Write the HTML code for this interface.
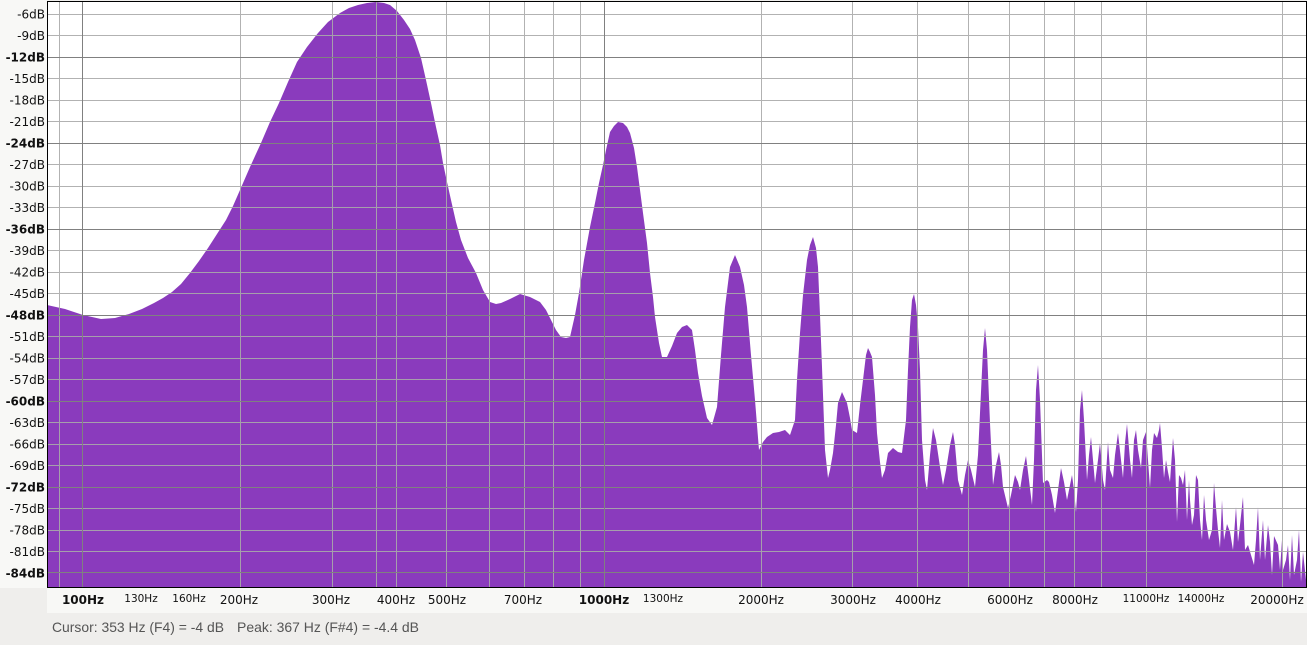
<!DOCTYPE html>
<html><head><meta charset="utf-8"><style>
html,body{margin:0;padding:0;background:#efeeec;}
svg{display:block;font-family:"DejaVu Sans","Liberation Sans",sans-serif;}
</style></head><body>
<svg width="1307" height="645" viewBox="0 0 1307 645" xmlns="http://www.w3.org/2000/svg">
<rect x="0" y="0" width="1307" height="645" fill="#efeeec"/>
<rect x="0" y="0" width="47" height="588" fill="#f8f8f6"/>
<rect x="47" y="588" width="1260" height="25" fill="#f8f8f6"/>
<rect x="47" y="1" width="1260" height="586" fill="#ffffff"/>
<path fill="#8a3bbd" d="M47,587 L47,305 L65,309 L83,315 L101,319 L115,318 L129,314 L142,309 L154,303 L163,298 L172,292 L181,284 L190,273 L199,261 L208,248 L217,234 L226,220 L233,206 L240,190 L250,167 L261,143 L270,122 L279,103 L288,82 L297,62 L307,47 L318,33 L328,22 L340,13 L349,8 L358,5 L367,3 L376,2 L384,3 L390,5 L397,11 L404,20 L410,29 L415,40 L421,58 L426,80 L431,103 L436,127 L440,145 L443,163 L447,182 L451,200 L456,222 L461,240 L468,258 L476,273 L483,290 L490,302 L496,304 L501,303 L510,299 L520,294 L530,297 L540,302 L546,310 L551,320 L556,330 L561,337 L566,338 L570,337 L575,315 L579,293 L584,260 L590,227 L595,203 L599,183 L603,165 L606,150 L610,132 L614,126 L618,122 L623,123 L627,127 L630,133 L634,148 L637,167 L640,190 L643,213 L647,243 L650,273 L653,297 L655,317 L659,343 L662,357 L667,357 L672,346 L677,333 L682,327 L687,325 L692,330 L695,350 L698,373 L702,396 L707,418 L712,425 L717,407 L721,355 L725,307 L730,267 L735,255 L740,267 L744,285 L747,307 L751,355 L755,400 L759,450 L763,442 L767,437 L773,433 L779,432 L785,430 L790,435 L795,420 L797,380 L800,333 L803,295 L807,260 L810,245 L813,237 L816,248 L818,267 L820,315 L822,367 L825,450 L828,478 L830,470 L833,453 L836,425 L838,403 L842,392 L847,403 L850,418 L852,430 L857,433 L860,405 L863,380 L866,355 L868,348 L870,352 L872,357 L875,395 L877,433 L880,462 L882,478 L885,470 L888,453 L893,448 L898,452 L902,453 L906,420 L908,370 L910,327 L912,300 L914,294 L916,305 L918,327 L920,370 L922,440 L925,480 L927,490 L930,455 L933,428 L936,440 L940,467 L943,485 L946,470 L950,445 L953,432 L955,445 L958,480 L962,495 L965,475 L968,460 L971,470 L975,487 L978,455 L980,413 L983,350 L985,328 L987,350 L990,423 L993,485 L996,465 L999,452 L1001,465 L1003,487 L1008,508 L1011,495 L1015,475 L1018,482 L1020,490 L1023,470 L1026,456 L1029,480 L1032,505 L1034,460 L1036,390 L1038,365 L1040,400 L1043,483 L1047,480 L1049,482 L1052,495 L1055,513 L1058,490 L1061,468 L1064,482 L1067,500 L1070,485 L1072,475 L1074,490 L1076,512 L1078,480 L1080,410 L1082,390 L1084,420 L1087,480 L1089,455 L1091,437 L1093,460 L1095,483 L1098,460 L1100,443 L1103,480 L1105,490 L1108,442 L1110,470 L1113,478 L1115,455 L1118,433 L1121,460 L1123,478 L1125,443 L1127,424 L1130,460 L1132,478 L1134,440 L1136,430 L1138,450 L1141,468 L1143,440 L1146,432 L1148,460 L1150,488 L1152,450 L1154,433 L1157,438 L1159,430 L1160,423 L1162,448 L1164,478 L1166,460 L1168,472 L1170,482 L1173,438 L1175,460 L1177,522 L1179,475 L1181,478 L1183,485 L1185,470 L1187,520 L1189,480 L1190,500 L1192,525 L1194,515 L1196,475 L1198,480 L1200,520 L1202,540 L1204,495 L1206,520 L1209,540 L1212,530 L1214,483 L1216,508 L1218,530 L1220,548 L1222,500 L1224,540 L1227,524 L1230,532 L1233,550 L1236,507 L1238,542 L1240,525 L1243,497 L1245,550 L1248,545 L1251,555 L1254,565 L1256,540 L1258,507 L1260,560 L1263,520 L1265,560 L1268,525 L1270,542 L1272,575 L1274,536 L1278,545 L1280,570 L1282,540 L1283,570 L1286,560 L1288,545 L1290,580 L1292,535 L1294,575 L1297,560 L1299,530 L1301,582 L1303,552 L1306,580 L1306,587 Z"/>
<g stroke="#aaaaaa" stroke-width="1" opacity="0.9">
<line x1="47" x2="1307" y1="14.5" y2="14.5"/><line x1="47" x2="1307" y1="35.5" y2="35.5"/>
<line x1="47" x2="1307" y1="78.5" y2="78.5"/><line x1="47" x2="1307" y1="100.5" y2="100.5"/><line x1="47" x2="1307" y1="121.5" y2="121.5"/>
<line x1="47" x2="1307" y1="164.5" y2="164.5"/><line x1="47" x2="1307" y1="186.5" y2="186.5"/><line x1="47" x2="1307" y1="207.5" y2="207.5"/>
<line x1="47" x2="1307" y1="250.5" y2="250.5"/><line x1="47" x2="1307" y1="272.5" y2="272.5"/><line x1="47" x2="1307" y1="293.5" y2="293.5"/>
<line x1="47" x2="1307" y1="336.5" y2="336.5"/><line x1="47" x2="1307" y1="358.5" y2="358.5"/><line x1="47" x2="1307" y1="379.5" y2="379.5"/>
<line x1="47" x2="1307" y1="422.5" y2="422.5"/><line x1="47" x2="1307" y1="444.5" y2="444.5"/><line x1="47" x2="1307" y1="465.5" y2="465.5"/>
<line x1="47" x2="1307" y1="508.5" y2="508.5"/><line x1="47" x2="1307" y1="530.5" y2="530.5"/><line x1="47" x2="1307" y1="551.5" y2="551.5"/>
<line y1="1" y2="587" x1="59.5" x2="59.5"/><line y1="1" y2="587" x1="240.5" x2="240.5"/><line y1="1" y2="587" x1="332.5" x2="332.5"/>
<line y1="1" y2="587" x1="376.5" x2="376.5"/><line y1="1" y2="587" x1="396.5" x2="396.5"/><line y1="1" y2="587" x1="446.5" x2="446.5"/>
<line y1="1" y2="587" x1="489.5" x2="489.5"/><line y1="1" y2="587" x1="524.5" x2="524.5"/><line y1="1" y2="587" x1="553.5" x2="553.5"/>
<line y1="1" y2="587" x1="580.5" x2="580.5"/><line y1="1" y2="587" x1="761.5" x2="761.5"/><line y1="1" y2="587" x1="852.5" x2="852.5"/>
<line y1="1" y2="587" x1="917.5" x2="917.5"/><line y1="1" y2="587" x1="968.5" x2="968.5"/><line y1="1" y2="587" x1="1009.5" x2="1009.5"/>
<line y1="1" y2="587" x1="1044.5" x2="1044.5"/><line y1="1" y2="587" x1="1074.5" x2="1074.5"/><line y1="1" y2="587" x1="1101.5" x2="1101.5"/>
<line y1="1" y2="587" x1="1146.5" x2="1146.5"/><line y1="1" y2="587" x1="1282.5" x2="1282.5"/>
</g>
<g stroke="#808080" stroke-width="1">
<line x1="47" x2="1307" y1="57.5" y2="57.5"/><line x1="47" x2="1307" y1="143.5" y2="143.5"/><line x1="47" x2="1307" y1="229.5" y2="229.5"/>
<line x1="47" x2="1307" y1="315.5" y2="315.5"/><line x1="47" x2="1307" y1="401.5" y2="401.5"/><line x1="47" x2="1307" y1="487.5" y2="487.5"/>
<line x1="47" x2="1307" y1="572.5" y2="572.5"/>
<line y1="1" y2="587" x1="82.5" x2="82.5"/><line y1="1" y2="587" x1="604.5" x2="604.5"/>
</g>
<g stroke="#000" stroke-width="1">
<line x1="47.5" y1="1" x2="47.5" y2="588"/><line x1="47" y1="1.5" x2="1307" y2="1.5"/><line x1="47" y1="587.5" x2="1307" y2="587.5"/>
<line x1="1306.5" y1="1" x2="1306.5" y2="588"/>
</g>
<g font-size="12" fill="#111" text-anchor="end">
<text x="45" y="18.5">-6dB</text><text x="45" y="40">-9dB</text><text x="45" y="61.5" font-weight="bold">-12dB</text>
<text x="45" y="83">-15dB</text><text x="45" y="104.5">-18dB</text><text x="45" y="126">-21dB</text>
<text x="45" y="147.5" font-weight="bold">-24dB</text><text x="45" y="169">-27dB</text><text x="45" y="190.5">-30dB</text>
<text x="45" y="212">-33dB</text><text x="45" y="233.5" font-weight="bold">-36dB</text><text x="45" y="255">-39dB</text>
<text x="45" y="276.5">-42dB</text><text x="45" y="298">-45dB</text><text x="45" y="319.5" font-weight="bold">-48dB</text>
<text x="45" y="341">-51dB</text><text x="45" y="362.5">-54dB</text><text x="45" y="384">-57dB</text>
<text x="45" y="405.5" font-weight="bold">-60dB</text><text x="45" y="427">-63dB</text><text x="45" y="448.5">-66dB</text>
<text x="45" y="470">-69dB</text><text x="45" y="491.5" font-weight="bold">-72dB</text><text x="45" y="513">-75dB</text>
<text x="45" y="534.5">-78dB</text><text x="45" y="556">-81dB</text><text x="45" y="577.5" font-weight="bold">-84dB</text>
</g>
<g font-size="12" fill="#111" text-anchor="middle">
<text x="83" y="604" font-weight="bold">100Hz</text>
<text x="141" y="602" font-size="10.5">130Hz</text><text x="189" y="602" font-size="10.5">160Hz</text>
<text x="239" y="604">200Hz</text><text x="331" y="604">300Hz</text><text x="396" y="604">400Hz</text>
<text x="447" y="604">500Hz</text><text x="523" y="604">700Hz</text>
<text x="604" y="604" font-weight="bold">1000Hz</text><text x="663" y="602" font-size="10.5">1300Hz</text>
<text x="761" y="604">2000Hz</text><text x="853" y="604">3000Hz</text><text x="918" y="604">4000Hz</text>
<text x="1010" y="604">6000Hz</text><text x="1075" y="604">8000Hz</text>
<text x="1146" y="602" font-size="10.5">11000Hz</text><text x="1201" y="602" font-size="10.5">14000Hz</text>
<text x="1277" y="604">20000Hz</text>
</g>
<g font-family="Liberation Sans, sans-serif" font-size="14" fill="#555">
<text x="52" y="632" textLength="172" lengthAdjust="spacingAndGlyphs">Cursor: 353 Hz (F4) = -4 dB</text>
<text x="237" y="632" textLength="182" lengthAdjust="spacingAndGlyphs">Peak: 367 Hz (F#4) = -4.4 dB</text>
</g>
</svg>
</body></html>
